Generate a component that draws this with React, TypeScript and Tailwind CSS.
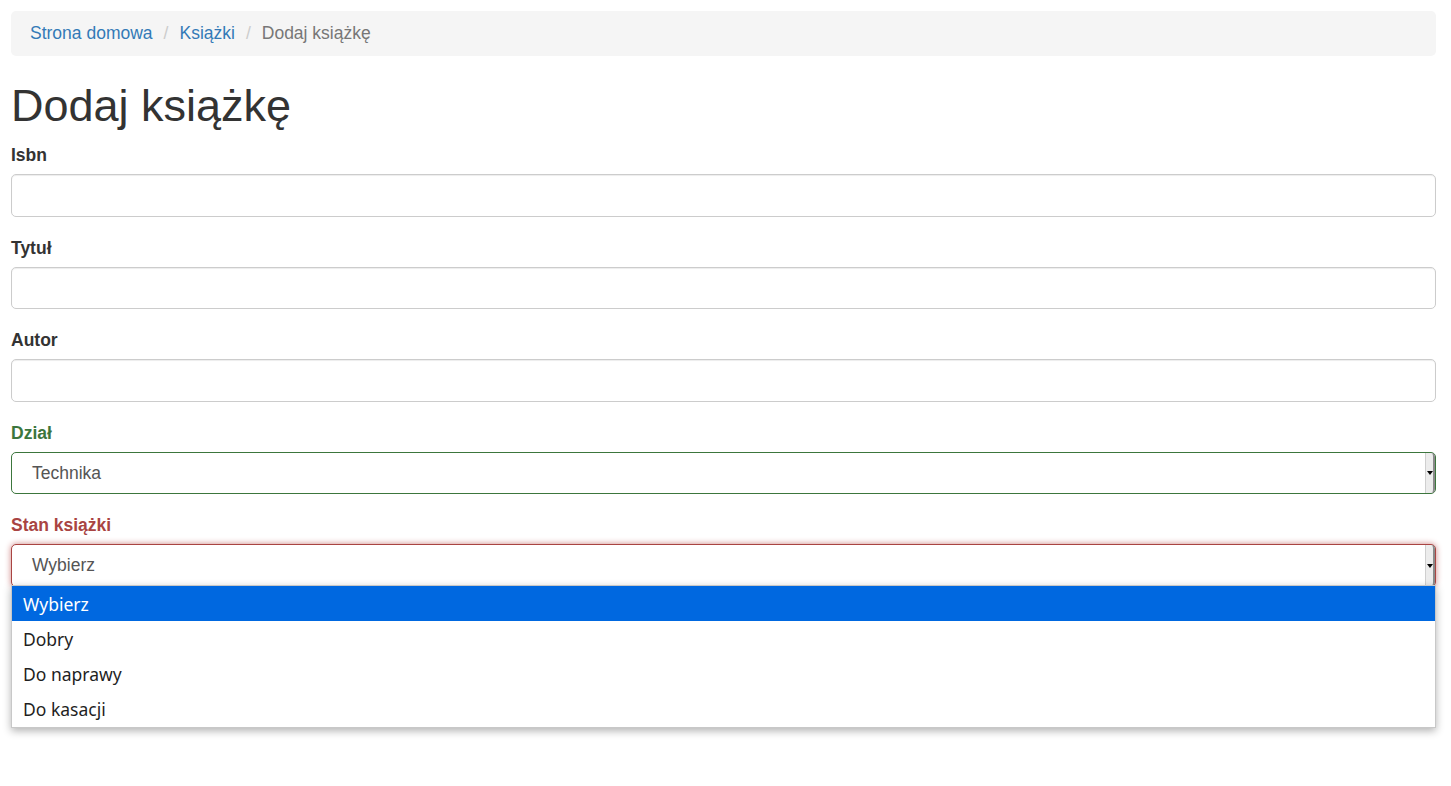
import React from "react";

const font = { fontFamily: '"Liberation Sans", Arial, Helvetica, sans-serif' };

function Crumbs() {
  const sep = (
    <span className="text-[#ccc] pl-[11px] pr-[11px]">/</span>
  );
  return (
    <ol className="flex items-center bg-[#f5f5f5] rounded-[5px] h-[45px] px-[19px] text-[17.5px] leading-[25px] mb-[25px]">
      <li className="text-[#337ab7]">Strona domowa</li>
      {sep}
      <li className="text-[#337ab7]">Książki</li>
      {sep}
      <li className="text-[#777]">Dodaj książkę</li>
    </ol>
  );
}

function Field({ label }: { label: string }) {
  return (
    <div className="mb-[18.75px]">
      <label className="block font-bold text-[#333] text-[17.5px] leading-[25px] mb-[6.25px]">
        {label}
      </label>
      <div className="h-[42.5px] border border-[#ccc] rounded-[5px] bg-white shadow-[inset_0_1px_1px_rgba(0,0,0,0.075)]" />
    </div>
  );
}

function SelectBox({
  value,
  border,
  glow,
}: {
  value: string;
  border: string;
  glow?: boolean;
}) {
  return (
    <div
      className={
        "relative h-[42.5px] border rounded-[5px] bg-white flex items-center " +
        border +
        (glow ? " shadow-[0_0_6px_#ce8483]" : "")
      }
    >
      <span className="pl-[20px] text-[17.5px] text-[#555]">{value}</span>
      <div className="absolute right-0 top-0 bottom-0 w-[10px] bg-[#ececec] border-l border-[#cfcfcf] border-r-2 border-r-[#8a8a8a] rounded-r-[4px] flex items-center justify-center">
        <div className="w-0 h-0 border-l-[3px] border-r-[3px] border-t-[4px] border-l-transparent border-r-transparent border-t-black" />
      </div>
    </div>
  );
}

export default function App() {
  const options = ["Wybierz", "Dobry", "Do naprawy", "Do kasacji"];
  return (
    <div className="min-h-screen bg-white pt-[11px] pl-[11px] pr-[15px]" style={font}>
      <Crumbs />

      <h1 className="text-[45px] leading-[49.5px] text-[#333] mb-[12.5px]">Dodaj książkę</h1>

      <Field label="Isbn" />
      <Field label="Tytuł" />
      <Field label="Autor" />

      <div className="mb-[18.75px]">
        <label className="block font-bold text-[#3c763d] text-[17.5px] leading-[25px] mb-[6.25px]">
          Dział
        </label>
        <SelectBox value="Technika" border="border-[#3c763d]" />
      </div>

      <div className="mb-[18.75px] relative">
        <label className="block font-bold text-[#a94442] text-[17.5px] leading-[25px] mb-[6.25px]">
          Stan książki
        </label>
        <SelectBox value="Wybierz" border="border-[#a94442]" glow />

        {/* open native dropdown list */}
        <ul
          className="absolute left-0 right-0 top-[72px] bg-white border border-[#c8c8c8] shadow-[0_3px_8px_rgba(0,0,0,0.3)] z-10"
          style={{ fontFamily: '"Noto Sans", "Open Sans", sans-serif' }}
        >
          {options.map((o, i) => (
            <li
              key={o}
              className={
                "h-[35.25px] flex items-center pl-[11px] text-[17.5px] " +
                (i === 0 ? "bg-[#0068e0] text-white" : "text-[#1f1f1f]")
              }
            >
              {o}
            </li>
          ))}
        </ul>
      </div>
    </div>
  );
}
